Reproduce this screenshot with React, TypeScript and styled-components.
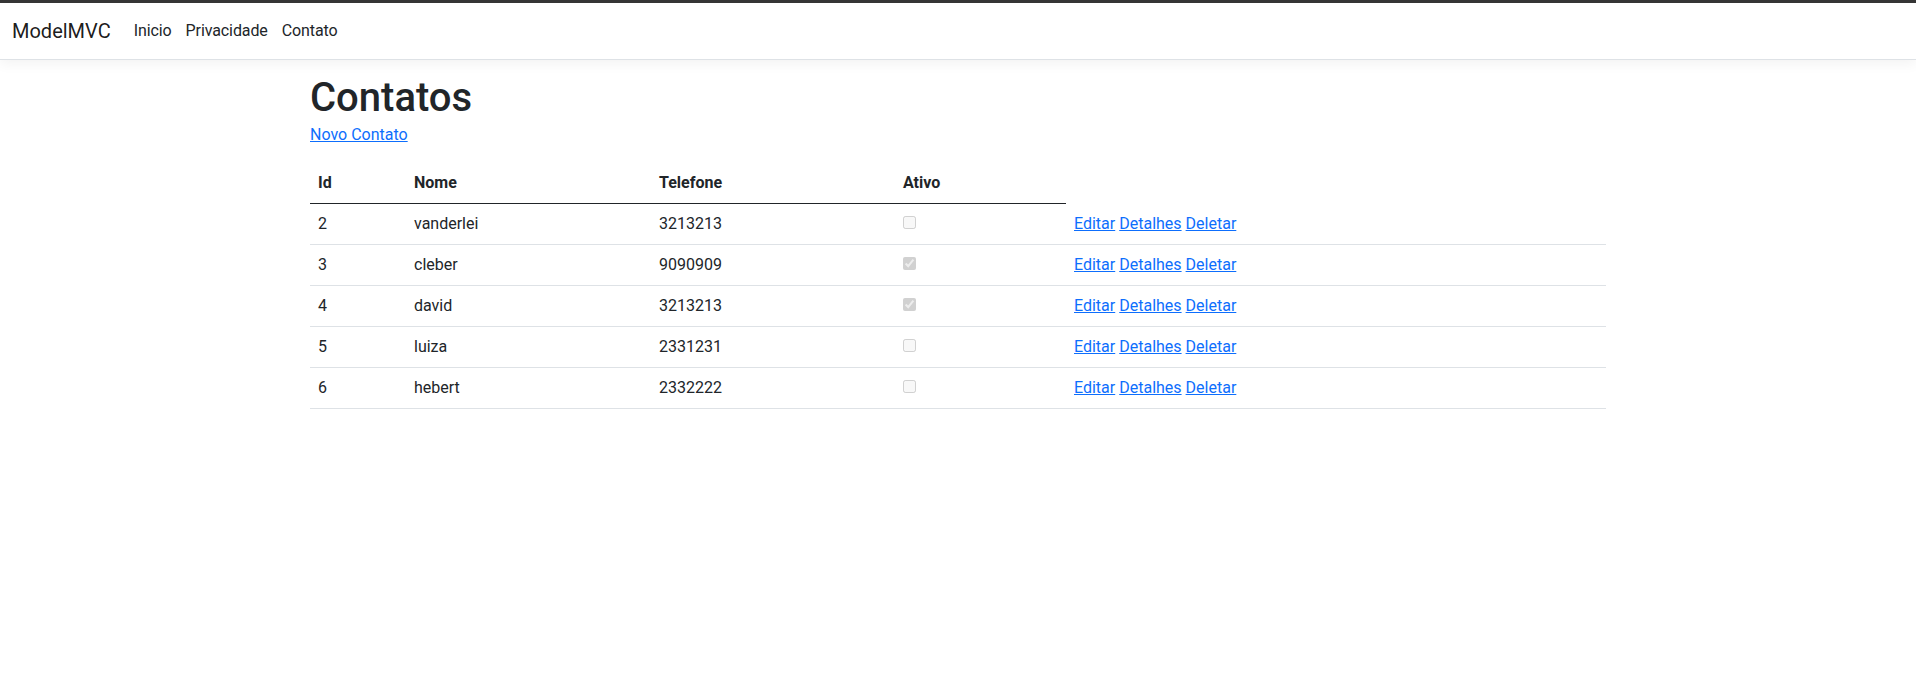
import styled, { createGlobalStyle } from "styled-components";

const GlobalStyle = createGlobalStyle`
	* {
		box-sizing: border-box;
	}
	html, body {
		margin: 0;
		padding: 0;
		background: #fff;
	}
	body {
		font-family: Roboto, "Noto Sans", Arial, sans-serif;
		font-size: 16px;
		line-height: 1.5;
		color: #212529;
	}
`;

const TopStrip = styled.div`
	height: 3px;
	background-color: #363636;
`;

const Navbar = styled.nav`
	display: flex;
	align-items: center;
	padding: 8px 12px;
	background-color: #fff;
	border-bottom: 1px solid #dee2e6;
	box-shadow: 0 4px 12px rgba(0, 0, 0, 0.05);
	margin-bottom: 16px;
`;

const Brand = styled.a`
	font-size: 20px;
	line-height: 30px;
	padding: 5px 0;
	margin-right: 16px;
	color: rgba(0, 0, 0, 0.9);
	text-decoration: none;
`;

const NavList = styled.ul`
	display: flex;
	list-style: none;
	margin: 0;
	padding: 0;
`;

const NavLink = styled.a`
	display: block;
	padding: 8px 7px;
	color: #212529;
	text-decoration: none;
	letter-spacing: -0.1px;
`;

const Container = styled.main`
	width: 1320px;
	margin: 0 auto;
	padding: 0 12px;
`;

const Title = styled.h1`
	font-size: 40px;
	font-weight: 500;
	line-height: 1.2;
	margin: -2px 0 1px;
`;

const Paragraph = styled.p`
	margin: 0 0 16px;
`;

const Link = styled.a`
	color: #0d6efd;
	text-decoration: underline;
`;

const Table = styled.table`
	width: 100%;
	border-collapse: collapse;
	table-layout: fixed;
	margin-bottom: 16px;
`;

const Th = styled.th<{ $w: number }>`
	width: ${(p) => p.$w}px;
	text-align: left;
	font-weight: 700;
	padding: 8px;
	border-bottom: 1px solid #212529;
`;

const EmptyTh = styled.th`
	padding: 8px;
`;

const Td = styled.td`
	padding: 8px;
	border-bottom: 1px solid #dee2e6;
`;

const CheckBox = styled.input`
	margin: 3px 3px 3px 0;
`;

const Actions = styled.span`
	display: inline-flex;
	gap: 4px;
`;

const contatos = [
	{ id: 2, nome: "vanderlei", telefone: "3213213", ativo: false },
	{ id: 3, nome: "cleber", telefone: "9090909", ativo: true },
	{ id: 4, nome: "david", telefone: "3213213", ativo: true },
	{ id: 5, nome: "luiza", telefone: "2331231", ativo: false },
	{ id: 6, nome: "hebert", telefone: "2332222", ativo: false },
];

function App() {
	return (
		<>
			<GlobalStyle />
			<TopStrip />
			<Navbar>
				<Brand href="#">ModelMVC</Brand>
				<NavList>
					<li>
						<NavLink href="#">Inicio</NavLink>
					</li>
					<li>
						<NavLink href="#">Privacidade</NavLink>
					</li>
					<li>
						<NavLink href="#">Contato</NavLink>
					</li>
				</NavList>
			</Navbar>
			<Container>
				<Title>Contatos</Title>
				<Paragraph>
					<Link href="#">Novo Contato</Link>
				</Paragraph>
				<Table>
					<thead>
						<tr>
							<Th $w={96}>Id</Th>
							<Th $w={245}>Nome</Th>
							<Th $w={244}>Telefone</Th>
							<Th $w={171}>Ativo</Th>
							<EmptyTh></EmptyTh>
						</tr>
					</thead>
					<tbody>
						{contatos.map((c) => (
							<tr key={c.id}>
								<Td>{c.id}</Td>
								<Td>{c.nome}</Td>
								<Td>{c.telefone}</Td>
								<Td>
									<CheckBox type="checkbox" checked={c.ativo} disabled readOnly />
								</Td>
								<Td>
									<Actions>
										<Link href="#">Editar</Link>
										<Link href="#">Detalhes</Link>
										<Link href="#">Deletar</Link>
									</Actions>
								</Td>
							</tr>
						))}
					</tbody>
				</Table>
			</Container>
		</>
	);
}

export default App;
